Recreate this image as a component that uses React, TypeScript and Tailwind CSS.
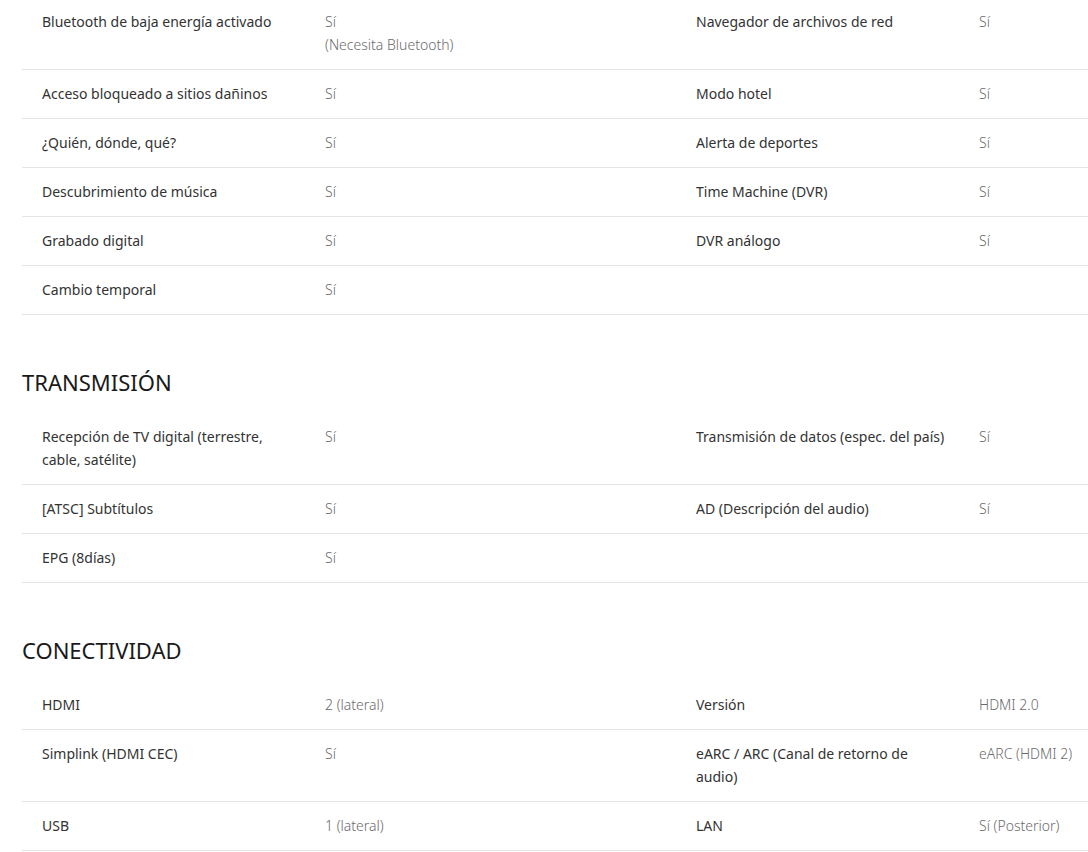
type Spec = { label: string; value: string | string[] };
type Row = [Spec, Spec | null];

const GENERAL: Row[] = [
  [
    { label: "Bluetooth de baja energía activado", value: ["Sí", "(Necesita Bluetooth)"] },
    { label: "Navegador de archivos de red", value: "Sí" },
  ],
  [
    { label: "Acceso bloqueado a sitios dañinos", value: "Sí" },
    { label: "Modo hotel", value: "Sí" },
  ],
  [
    { label: "¿Quién, dónde, qué?", value: "Sí" },
    { label: "Alerta de deportes", value: "Sí" },
  ],
  [
    { label: "Descubrimiento de música", value: "Sí" },
    { label: "Time Machine (DVR)", value: "Sí" },
  ],
  [
    { label: "Grabado digital", value: "Sí" },
    { label: "DVR análogo", value: "Sí" },
  ],
  [{ label: "Cambio temporal", value: "Sí" }, null],
];

const TRANSMISION: Row[] = [
  [
    { label: "Recepción de TV digital (terrestre, cable, satélite)", value: "Sí" },
    { label: "Transmisión de datos (espec. del país)", value: "Sí" },
  ],
  [
    { label: "[ATSC] Subtítulos", value: "Sí" },
    { label: "AD (Descripción del audio)", value: "Sí" },
  ],
  [{ label: "EPG (8días)", value: "Sí" }, null],
];

const CONECTIVIDAD: Row[] = [
  [
    { label: "HDMI", value: "2 (lateral)" },
    { label: "Versión", value: "HDMI 2.0" },
  ],
  [
    { label: "Simplink (HDMI CEC)", value: "Sí" },
    { label: "eARC / ARC (Canal de retorno de audio)", value: "eARC (HDMI 2)" },
  ],
  [
    { label: "USB", value: "1 (lateral)" },
    { label: "LAN", value: "Sí (Posterior)" },
  ],
];

function Cell({ spec, last }: { spec: Spec | null; last?: boolean }) {
  const values = spec ? (Array.isArray(spec.value) ? spec.value : [spec.value]) : [];
  return (
    <>
      <div className="w-[283px] shrink-0 pr-[31px] text-[#333]">{spec?.label}</div>
      <div className={last ? "flex-1 font-light text-[#6b6b6b]" : "w-[371px] shrink-0 font-light text-[#6b6b6b]"}>
        {values.map((v) => (
          <div key={v}>{v}</div>
        ))}
      </div>
    </>
  );
}

function SpecTable({ rows }: { rows: Row[] }) {
  return (
    <div>
      {rows.map(([left, right], i) => (
        <div key={i} className="flex border-b border-[#e4e4e4] pt-[12px] pb-[13px] pl-5 text-[14px] leading-[23px]">
          <Cell spec={left} />
          <Cell spec={right} last />
        </div>
      ))}
    </div>
  );
}

function Section({ title, rows }: { title: string; rows: Row[] }) {
  return (
    <section className="mt-[48px]">
      <h2 className="mb-[12px] text-[22px] leading-[38px] text-[#1a1a1a]">{title}</h2>
      <SpecTable rows={rows} />
    </section>
  );
}

export default function App() {
  return (
    <div
      className="h-[852px] w-[1088px] overflow-hidden bg-white"
      style={{ fontFamily: '"Noto Sans", "Open Sans", Arial, sans-serif' }}
    >
      <div className="-mt-[2px] ml-[22px] w-[1100px]">
        <SpecTable rows={GENERAL} />
        <Section title="TRANSMISIÓN" rows={TRANSMISION} />
        <Section title="CONECTIVIDAD" rows={CONECTIVIDAD} />
      </div>
    </div>
  );
}
